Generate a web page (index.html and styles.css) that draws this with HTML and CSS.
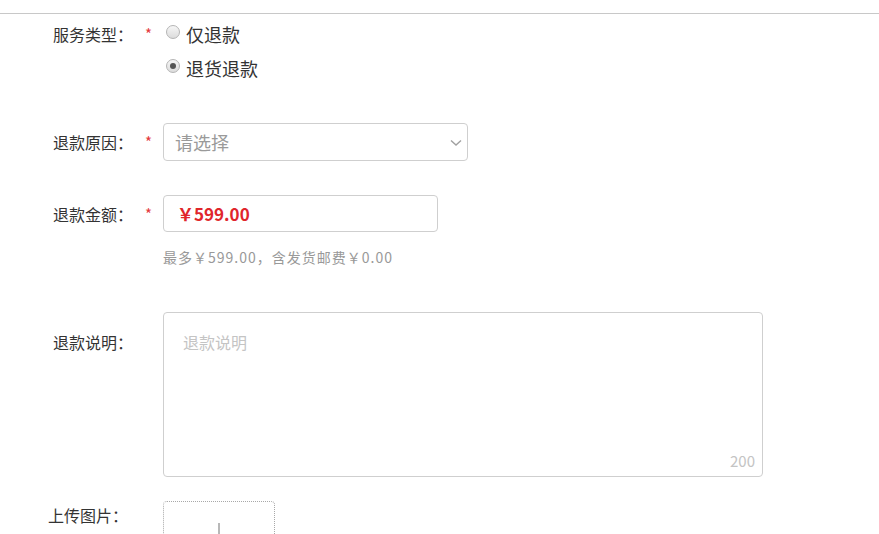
FILE: index.html
```html
<!DOCTYPE html>
<html lang="zh-CN">
<head>
<meta charset="utf-8">
<title>申请退款</title>
<link rel="stylesheet" href="styles.css">
</head>
<body>
<div class="topbar"></div>
<form class="form">
  <div class="row row-service">
    <div class="label">服务类型：</div>
    <div class="star">*</div>
    <div class="radios">
      <label class="radio"><span class="dot"></span><span class="rtext">仅退款</span></label>
      <label class="radio"><span class="dot checked"></span><span class="rtext">退货退款</span></label>
    </div>
  </div>

  <div class="row row-reason">
    <div class="label">退款原因：</div>
    <div class="star">*</div>
    <div class="select">
      <span class="placeholder">请选择</span>
      <svg class="chevron" width="12" height="8" viewBox="0 0 12 8"><path d="M1 1.5 L6 6 L11 1.5" fill="none" stroke="#a0a0a0" stroke-width="1.4"/></svg>
    </div>
  </div>

  <div class="row row-amount">
    <div class="label">退款金额：</div>
    <div class="star">*</div>
    <div class="amount-col">
      <div class="amount">￥599.00</div>
      <div class="hint">最多￥599.00，含发货邮费￥0.00</div>
    </div>
  </div>

  <div class="row row-desc">
    <div class="label">退款说明：</div>
    <div class="star"></div>
    <div class="textarea">
      <span class="ta-placeholder">退款说明</span>
      <span class="count">200</span>
    </div>
  </div>

  <div class="row row-upload">
    <div class="label label-upload">上传图片：</div>
    <div class="star star-upload"></div>
    <div class="upload"><span class="plus-v"></span><span class="plus-h"></span></div>
  </div>
</form>
</body>
</html>
```

FILE: styles.css
```css
html, body {
  margin: 0;
  padding: 0;
  background: #fff;
}
body {
  font-family: "Noto Sans CJK SC", "Noto Sans", sans-serif;
  color: #333;
  overflow: hidden;
}
.topbar {
  height: 13px;
  border-bottom: 1px solid #c8c8c8;
}
.form {
  display: flex;
  flex-direction: column;
}
.row {
  display: flex;
  align-items: flex-start;
}
.label {
  width: 133px;
  text-align: right;
  font-size: 16px;
  line-height: 34px;
  color: #333;
  flex: none;
}
.star {
  width: 30px;
  flex: none;
  box-sizing: border-box;
  padding-left: 12px;
  color: #e4393c;
  font-size: 15px;
  line-height: 34px;
}
.row-service {
  margin-top: 3px;
}
.radios {
  display: flex;
  flex-direction: column;
}
.radio {
  display: flex;
  align-items: center;
  height: 34px;
  padding-left: 3px;
}
.dot {
  width: 14px;
  height: 14px;
  box-sizing: border-box;
  border-radius: 50%;
  border: 1px solid #b5b5b5;
  background: linear-gradient(#f6f6f6, #dcdcdc);
  margin-right: 6px;
  margin-top: -4px;
  position: relative;
  flex: none;
}
.dot.checked::after {
  content: "";
  position: absolute;
  left: 3px;
  top: 3px;
  width: 6px;
  height: 6px;
  border-radius: 50%;
  background: #555;
}
.rtext {
  font-size: 18px;
  color: #333;
}
.row-reason {
  margin-top: 38px;
}
.row-reason .label, .row-reason .star,
.row-amount .label, .row-amount .star {
  line-height: 38px;
}
.select {
  width: 305px;
  height: 38px;
  box-sizing: border-box;
  border: 1px solid #cfcfcf;
  border-radius: 4px;
  display: flex;
  align-items: center;
  justify-content: space-between;
  padding: 0 5px 0 11px;
}
.placeholder {
  font-size: 18px;
  color: #9a9a9a;
}
.chevron {
  margin-top: 1px;
}
.row-amount {
  margin-top: 34px;
}
.amount-col {
  display: flex;
  flex-direction: column;
}
.amount {
  width: 275px;
  height: 37px;
  box-sizing: border-box;
  border: 1px solid #cfcfcf;
  border-radius: 4px;
  padding-left: 13px;
  display: flex;
  align-items: center;
  font-size: 17px;
  font-weight: bold;
  color: #e0262b;
}
.hint {
  margin-top: 15px;
  font-size: 14px;
  line-height: 20px;
  letter-spacing: 1px;
  color: #999;
}
.row-desc {
  margin-top: 45px;
}
.row-desc .label {
  margin-top: 13px;
}
.textarea {
  width: 600px;
  height: 165px;
  box-sizing: border-box;
  border: 1px solid #cfcfcf;
  border-radius: 4px;
  position: relative;
  padding: 17px 0 0 19px;
}
.ta-placeholder {
  font-size: 16px;
  line-height: 24px;
  color: #c4c4c4;
}
.count {
  position: absolute;
  right: 7px;
  bottom: 5px;
  font-size: 15px;
  color: #c4c4c4;
}
.row-upload {
  margin-top: 24px;
}
.label-upload {
  width: 128px;
  margin-top: -3px;
}
.star-upload {
  width: 35px;
}
.upload {
  width: 112px;
  height: 112px;
  box-sizing: border-box;
  border: 1px dotted #a8a8a8;
  border-radius: 4px;
  position: relative;
}
.plus-v {
  position: absolute;
  left: 54px;
  top: 21px;
  width: 2px;
  height: 68px;
  background: #b8b8b8;
}
.plus-h {
  position: absolute;
  left: 21px;
  top: 54px;
  width: 68px;
  height: 2px;
  background: #b8b8b8;
}
```
